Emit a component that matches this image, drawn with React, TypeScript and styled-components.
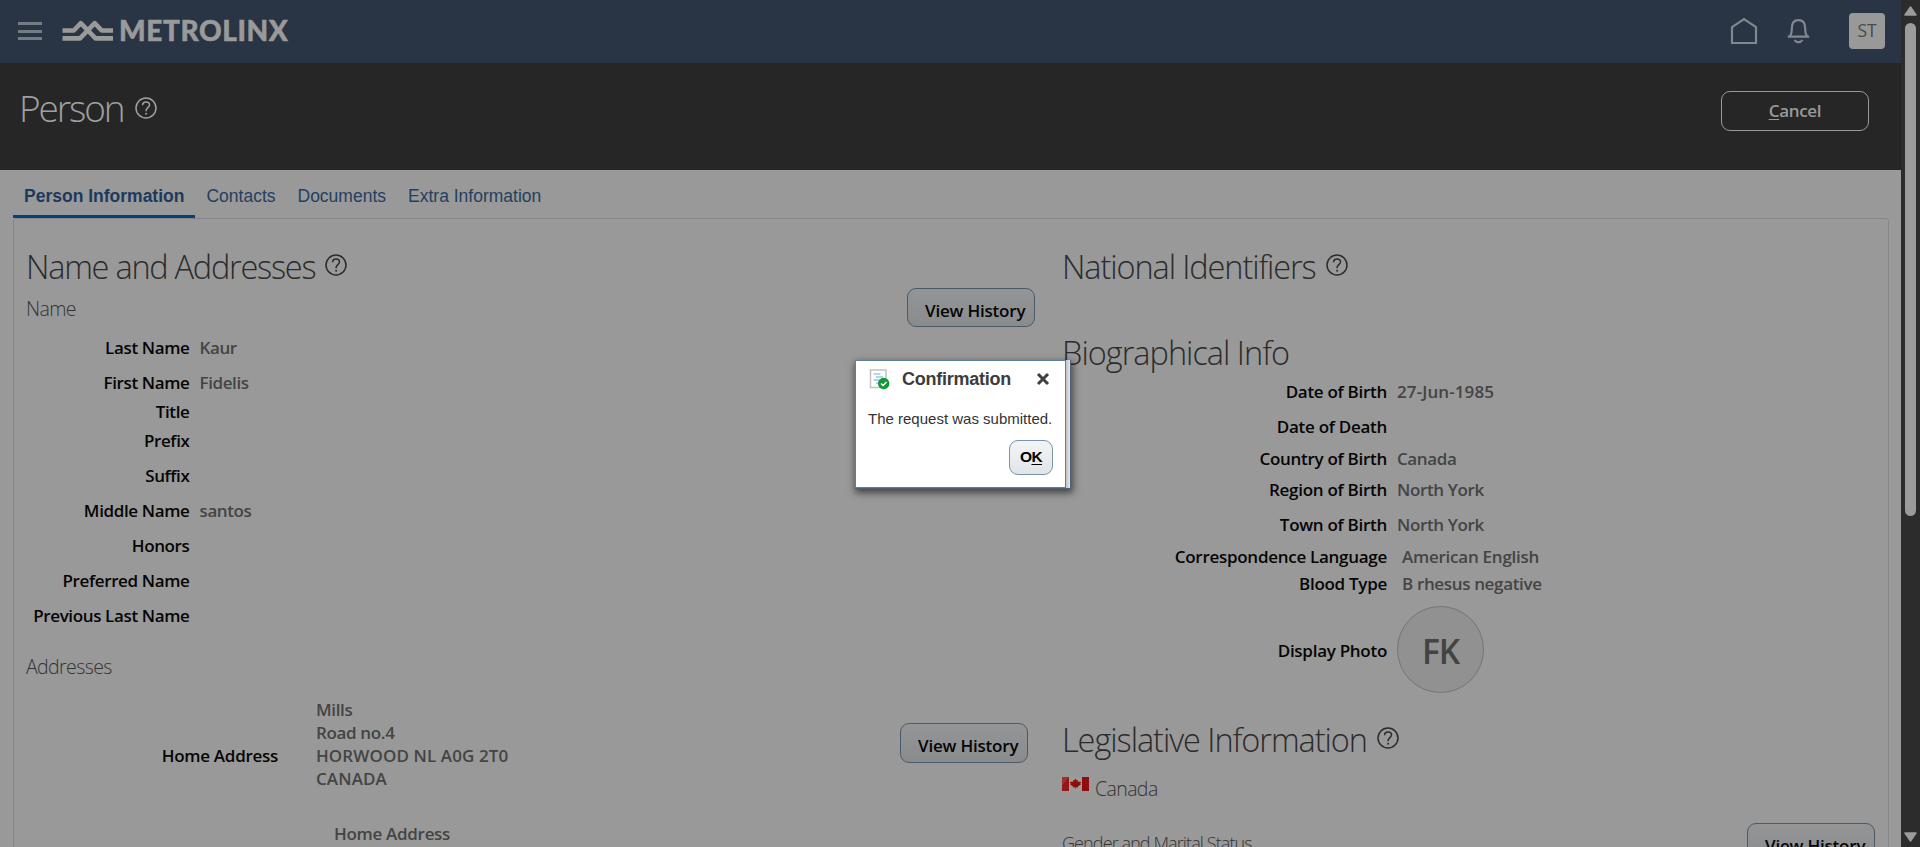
import React from "react";
import styled, { createGlobalStyle } from "styled-components";

const sans = `"Open Sans", "Noto Sans", sans-serif`;
const arial = `"Liberation Sans", Arial, sans-serif`;

const Global = createGlobalStyle`
  * { box-sizing: border-box; }
  html, body { margin: 0; padding: 0; overflow: hidden; background: #999; }
  body { font-family: ${sans}; }
  svg { display: block; flex: none; }
`;

const Shell = styled.div`
  display: flex;
  width: 1920px;
  height: 847px;
  overflow: hidden;
  position: relative;
`;
const Page = styled.div`
  width: 1901px;
  height: 847px;
  overflow: hidden;
  background: #999;
`;

const TopBar = styled.header`
  height: 63px;
  background: #293444;
  display: flex;
  align-items: center;
  padding: 0 16px 1px 18px;
`;
const Menu = styled.div`
  width: 24px;
  height: 18px;
  display: flex;
  flex-direction: column;
  justify-content: space-between;
  margin-right: 20px;
`;
const MenuLine = styled.i`
  height: 3px;
  background: #757b84;
`;
const Wordmark = styled.div`
  font: 900 28px/32px Lato, sans-serif;
  color: #9a9a9a;
  letter-spacing: 0.6px;
  margin-left: 5px;
  padding-bottom: 2px;
  -webkit-text-stroke: 0.5px #9a9a9a;
`;
const TopActions = styled.div`
  margin-left: auto;
  display: flex;
  align-items: center;
`;
const BellIcon = styled.svg`
  margin-left: 29px;
`;
const Initials = styled.div`
  width: 36px;
  height: 36px;
  border-radius: 4px;
  margin-left: 39px;
  background: #999;
  color: #4a4a4a;
  font: 500 17.5px/35px ${sans};
  text-align: center;
`;

const TitleBar = styled.div`
  height: 107px;
  background: #262626;
  display: flex;
  justify-content: space-between;
  padding: 19px 32px 0 19px;
`;
const PageTitle = styled.h1`
  margin: 0;
  height: 52px;
  display: flex;
  align-items: center;
  gap: 11px;
  font: 300 37px/50px ${sans};
  letter-spacing: -2.1px;
  color: #a0a0a0;
`;
const CancelButton = styled.button`
  width: 148px;
  height: 40px;
  margin-top: 9px;
  padding: 0;
  border: 1px solid #999;
  border-radius: 9px;
  background: transparent;
  color: #999;
  font: 600 17px/36px ${sans};
  letter-spacing: -0.3px;
`;
const Key = styled.span`
  text-decoration: underline;
  text-underline-offset: 2px;
  text-decoration-thickness: 1px;
`;

const Tabs = styled.nav`
  height: 48px;
  display: flex;
  padding-left: 13px;
`;
const Tab = styled.a<{ $active?: boolean }>`
  height: 48px;
  padding: 0 11px;
  font: ${(p) => (p.$active ? 700 : 400)} 17.5px/53px ${arial};
  color: ${(p) => (p.$active ? "#1c3a5e" : "#24405f")};
  border-bottom: 3px solid ${(p) => (p.$active ? "#04417c" : "transparent")};
`;
const Panel = styled.main`
  height: 640px;
  margin: 0 12px 0 13px;
  border: 1px solid #83878b;
  border-radius: 3px 3px 0 0;
  display: flex;
  padding-left: 12px;
`;
const Column = styled.section<{ $w: number }>`
  width: ${(p) => p.$w}px;
  flex: none;
`;
const Heading = styled.h2<{ $top: number; $ls?: number }>`
  margin: 0;
  padding-top: ${(p) => p.$top}px;
  display: flex;
  align-items: center;
  gap: 10px;
  font: 300 32.5px/44px ${sans};
  letter-spacing: ${(p) => p.$ls ?? -1}px;
  color: #2b2b2b;
`;
const SubHeading = styled.h3<{ $top: number; $small?: boolean }>`
  margin: ${(p) => p.$top}px 0 0;
  font: 300 ${(p) => (p.$small ? 18 : 19.5)}px/26px ${sans};
  letter-spacing: ${(p) => (p.$small ? -0.9 : -0.6)}px;
  color: #333;
  display: flex;
  gap: 6px;
  white-space: nowrap;
`;
const SubRow = styled.div`
  display: flex;
  justify-content: space-between;
  align-items: flex-start;
`;
const Field = styled.div<{ $top: number }>`
  display: flex;
  align-items: center;
  height: 24px;
  margin-top: ${(p) => p.$top}px;
  line-height: 24px;
  white-space: nowrap;
`;
const Label = styled.div<{ $w: number; $drop?: number; $ls?: number }>`
  width: ${(p) => p.$w}px;
  flex: none;
  padding-top: ${(p) => p.$drop ?? 0}px;
  text-align: right;
  color: #050505;
  font: 600 17px/24px ${sans};
  letter-spacing: ${(p) => p.$ls ?? -0.28}px;
`;
const Value = styled.div<{ $gap?: number; $ls?: number }>`
  margin-left: ${(p) => p.$gap ?? 10}px;
  color: #444;
  font: 600 17px/24px ${sans};
  letter-spacing: ${(p) => p.$ls ?? -0.4}px;
`;
const HistoryButton = styled.button<{ $top: number; $right: number; $h?: number }>`
  width: 128px;
  height: ${(p) => p.$h ?? 40}px;
  flex: none;
  margin: ${(p) => p.$top}px ${(p) => p.$right}px 0 0;
  padding: 5px 0 0 17px;
  border: 1px solid #4a5a68;
  border-radius: 9px;
  background: linear-gradient(#949596, #898b8d);
  color: #050505;
  text-align: left;
  white-space: nowrap;
  font: 600 17px/33px ${sans};
  letter-spacing: -0.2px;
`;
const AddressRow = styled.div`
  display: flex;
  align-items: center;
  height: 92px;
  margin-top: 18px;
`;
const AddressLines = styled.div`
  width: 584px;
  margin-left: 38px;
  color: #444;
  font: 600 17px/23px ${sans};
  letter-spacing: -0.35px;
`;
const Caps = styled.div`
  letter-spacing: 0.1px;
`;
const Avatar = styled.div`
  width: 87px;
  height: 87px;
  margin-left: 10px;
  flex: none;
  border: 1px solid #757575;
  border-radius: 50%;
  background: #919191;
  color: #434343;
  text-align: center;
  font: 600 33.5px/88px ${sans};
  letter-spacing: -1.2px;
`;

const Track = styled.aside`
  width: 19px;
  height: 847px;
  background: #2c2c2c;
  display: flex;
  flex-direction: column;
  align-items: center;
  padding: 6px 0 5px;
`;
const Thumb = styled.div`
  width: 11px;
  height: 493px;
  margin: 7px 0 auto;
  border-radius: 6px;
  background: #9b9b9b;
`;

const Dialog = styled.div`
  position: absolute;
  left: 855px;
  top: 360px;
  width: 216px;
  height: 129px;
  padding-right: 4px;
  background: linear-gradient(90deg, #b5b5b5, #e8e8e8) right / 5px 100% no-repeat;
  box-shadow: 1px 3px 7px 1px rgba(0, 0, 0, 0.55);
  border-right: 1px solid #4c6175;
  border-bottom: 1px solid #4c6175;
`;
const DialogBody = styled.div`
  width: 211px;
  height: 128px;
  border: 1px solid #5f7f9b;
  background: #fff;
  padding: 8px 12px 0 13px;
`;
const DialogHead = styled.div`
  display: flex;
  align-items: center;
  height: 20px;
  font: 700 18px/20px ${arial};
  color: #3c3c3c;
`;
const DialogTitle = styled.div`
  margin: 0 auto 0 12px;
  letter-spacing: -0.25px;
`;
const CloseIcon = styled.svg`
  margin-right: 3px;
`;
const DialogText = styled.p`
  margin: 19px 0 0 -1px;
  font: 400 15px/22px ${arial};
  color: #333;
  white-space: nowrap;
`;
const OkButton = styled.button`
  display: block;
  width: 44px;
  height: 35px;
  margin: 10px 0 0 auto;
  padding: 0 0 2px;
  border: 1px solid #7a93aa;
  border-radius: 9px;
  background: linear-gradient(#f3f4f5, #e1e5e8);
  font: 700 15.5px/20px ${arial};
  letter-spacing: -0.6px;
  color: #000;
`;

const Help = ({ color = "#2b2b2b", lift = 2 }: { color?: string; lift?: number }) => (
  <svg width="22" height={22 + lift * 2} viewBox={`0 0 22 ${22 + lift * 2}`} fill="none" stroke={color} strokeWidth="1.5">
    <circle cx="11" cy="11" r="10" />
    <path d="M7.600 8.200C7.600 5.900 9 4.900 11 4.900s3.500 1.200 3.500 3c0 2.600-3.400 2.800-3.400 5.700v.6" />
    <circle cx="11.100" cy="16.800" r="1" fill={color} stroke="none" />
  </svg>
);

const FlagIcon = styled.svg`
  margin-top: 1px;
`;
const Flag = () => (
  <FlagIcon width="27" height="14" viewBox="0 0 27 14">
    <rect width="27" height="14" fill="#9f9b9b" />
    <rect width="7" height="14" fill="#941717" />
    <rect x="20" width="7" height="14" fill="#8f0d0d" />
    <path d="M0 0h7L0 9z" fill="#a34040" opacity=".6" />
    <path d="M13.500 1.500l1.300 2 1.200-.5-.3 2.200 1.500-1 .3.800 1.700-.2-1 2.200.8.500-3.200 2.100.1.900-2.100-.2v1.500h-.6v-1.500l-2.100.2.1-.9L8 7.500l.8-.5-1-2.200 1.700.2.300-.8 1.500 1-.3-2.200 1.200.5z" fill="#8f0d0d" />
  </FlagIcon>
);

const nameFields: { label: string; value?: string; top: number }[] = [
  { label: "Last Name", value: "Kaur", top: 9 },
  { label: "First Name", value: "Fidelis", top: 11 },
  { label: "Title", top: 5 },
  { label: "Prefix", top: 5 },
  { label: "Suffix", top: 11 },
  { label: "Middle Name", value: "santos", top: 11 },
  { label: "Honors", top: 11 },
  { label: "Preferred Name", top: 11 },
  { label: "Previous Last Name", top: 11 },
];
const bioFields: { label: string; value?: string; top: number; gap?: number; ls?: number }[] = [
  { label: "Date of Birth", value: "27-Jun-1985", top: 5, ls: 0.1 },
  { label: "Date of Death", top: 11 },
  { label: "Country of Birth", value: "Canada", top: 8 },
  { label: "Region of Birth", value: "North York", top: 7, ls: -0.35 },
  { label: "Town of Birth", value: "North York", top: 11, ls: -0.35 },
  { label: "Correspondence Language", value: "American English", top: 8, gap: 15, ls: -0.25 },
  { label: "Blood Type", value: "B rhesus negative", top: 3, gap: 15, ls: -0.35 },
];

export default function App() {
  return (
    <Shell>
      <Global />
      <Page>
        <TopBar>
          <Menu><MenuLine /><MenuLine /><MenuLine /></Menu>
          <svg width="52" height="22" viewBox="0 0 52 22" fill="none" stroke="#9a9a9a" strokeWidth="4.600" strokeLinejoin="round">
            <path d="M.5 10.500H11.800L18.800 3.100L33.500 18.400H51" />
            <path d="M.5 18.400H18L32.700 3.100L39.700 10.500H51" />
          </svg>
          <Wordmark>METROLINX</Wordmark>
          <TopActions>
            <svg width="28" height="28" viewBox="0 0 28 28" fill="none" stroke="#82878e" strokeWidth="2.200">
              <path d="M2 10.200L14 2l12 8.200V26H2z" />
            </svg>
            <BellIcon width="23" height="26" viewBox="0 0 23 26" fill="none" stroke="#82878e" strokeWidth="2.200">
              <path d="M.8 18.600h21.400M2.800 18.200c1.700-1.700 2-3.700 2-7.700C4.800 5 7.500 2.200 11.500 2.200s6.700 2.800 6.700 8.300c0 4 .3 6 2 7.700" />
              <path d="M7.500 22c1 1.500 2.300 2.200 4 2.200s3-.7 4-2.200" />
            </BellIcon>
            <Initials>ST</Initials>
          </TopActions>
        </TopBar>
        <TitleBar>
          <PageTitle>Person <Help color="#a0a0a0" lift={0} /></PageTitle>
          <CancelButton><Key>C</Key>ancel</CancelButton>
        </TitleBar>
        <Tabs>
          <Tab $active>Person Information</Tab>
          <Tab>Contacts</Tab>
          <Tab>Documents</Tab>
          <Tab>Extra Information</Tab>
        </Tabs>
        <Panel>
          <Column $w={1036}>
            <Heading $top={26} $ls={-1.25}>Name and Addresses <Help /></Heading>
            <SubRow>
              <SubHeading $top={7}>Name</SubHeading>
              <HistoryButton $top={-1} $right={27} $h={39}>View History</HistoryButton>
            </SubRow>
            {nameFields.map((f) => (
              <Field key={f.label} $top={f.top}>
                <Label $w={163.5} $ls={-0.37}>{f.label}</Label>
                <Value>{f.value}</Value>
              </Field>
            ))}
            <SubHeading $top={26}>Addresses</SubHeading>
            <AddressRow>
              <Label $w={252} $drop={24}>Home Address</Label>
              <AddressLines>
                Mills<br />Road no.4
                <Caps>HORWOOD NL A0G 2T0</Caps>
                <Caps>CANADA</Caps>
              </AddressLines>
              <HistoryButton $top={-2} $right={0}>View History</HistoryButton>
            </AddressRow>
            <Field $top={32}><Value $gap={308} $ls={-0.3}>Home Address</Value></Field>
          </Column>
          <Column $w={813}>
            <Heading $top={26} $ls={-1.1}>National Identifiers <Help /></Heading>
            <Heading $top={42}>Biographical Info</Heading>
            {bioFields.map((f) => (
              <Field key={f.label} $top={f.top}>
                <Label $w={325}>{f.label}</Label>
                <Value $gap={f.gap} $ls={f.ls}>{f.value}</Value>
              </Field>
            ))}
            <Field $top={41}>
              <Label $w={325} $drop={3}>Display Photo</Label>
              <Avatar>FK</Avatar>
            </Field>
            <Heading $top={57} $ls={-1.05}>Legislative Information <Help /></Heading>
            <SubHeading $top={14}><Flag />Canada</SubHeading>
            <SubRow>
              <SubHeading $top={28} $small>Gender and Marital Status</SubHeading>
              <HistoryButton $top={21} $right={0}>View History</HistoryButton>
            </SubRow>
          </Column>
        </Panel>
      </Page>
      <Track>
        <svg width="13" height="10" viewBox="0 0 13 10"><path d="M6.500 1L12 9H1z" fill="#9b9b9b" stroke="#9b9b9b" strokeWidth="1.500" strokeLinejoin="round" /></svg>
        <Thumb />
        <svg width="13" height="10" viewBox="0 0 13 10"><path d="M6.500 9L12 1H1z" fill="#9b9b9b" stroke="#9b9b9b" strokeWidth="1.500" strokeLinejoin="round" /></svg>
      </Track>
      <Dialog>
        <DialogBody>
          <DialogHead>
            <svg width="21" height="21" viewBox="0 0 21 21" fill="none">
              <path d="M1.500 1H17v17.500H1.500z" fill="#fff" stroke="#c2c2c2" strokeWidth="1.500" />
              <path d="M4.500 5h7M7 8h7M4.500 11h6M7 14h3" stroke="#9cc8ee" strokeWidth="1.300" />
              <circle cx="14.700" cy="14.500" r="5.700" fill="#0f9a35" />
              <path d="M12 14.500l2 2 3.500-3.600" stroke="#fff" strokeWidth="1.500" />
            </svg>
            <DialogTitle>Confirmation</DialogTitle>
            <CloseIcon width="14" height="14" viewBox="0 0 14 14">
              <path d="M2 2l10 10M12 2L2 12" stroke="#3f3f3f" strokeWidth="3" />
            </CloseIcon>
          </DialogHead>
          <DialogText>The request was submitted.</DialogText>
          <OkButton>O<Key>K</Key></OkButton>
        </DialogBody>
      </Dialog>
    </Shell>
  );
}
